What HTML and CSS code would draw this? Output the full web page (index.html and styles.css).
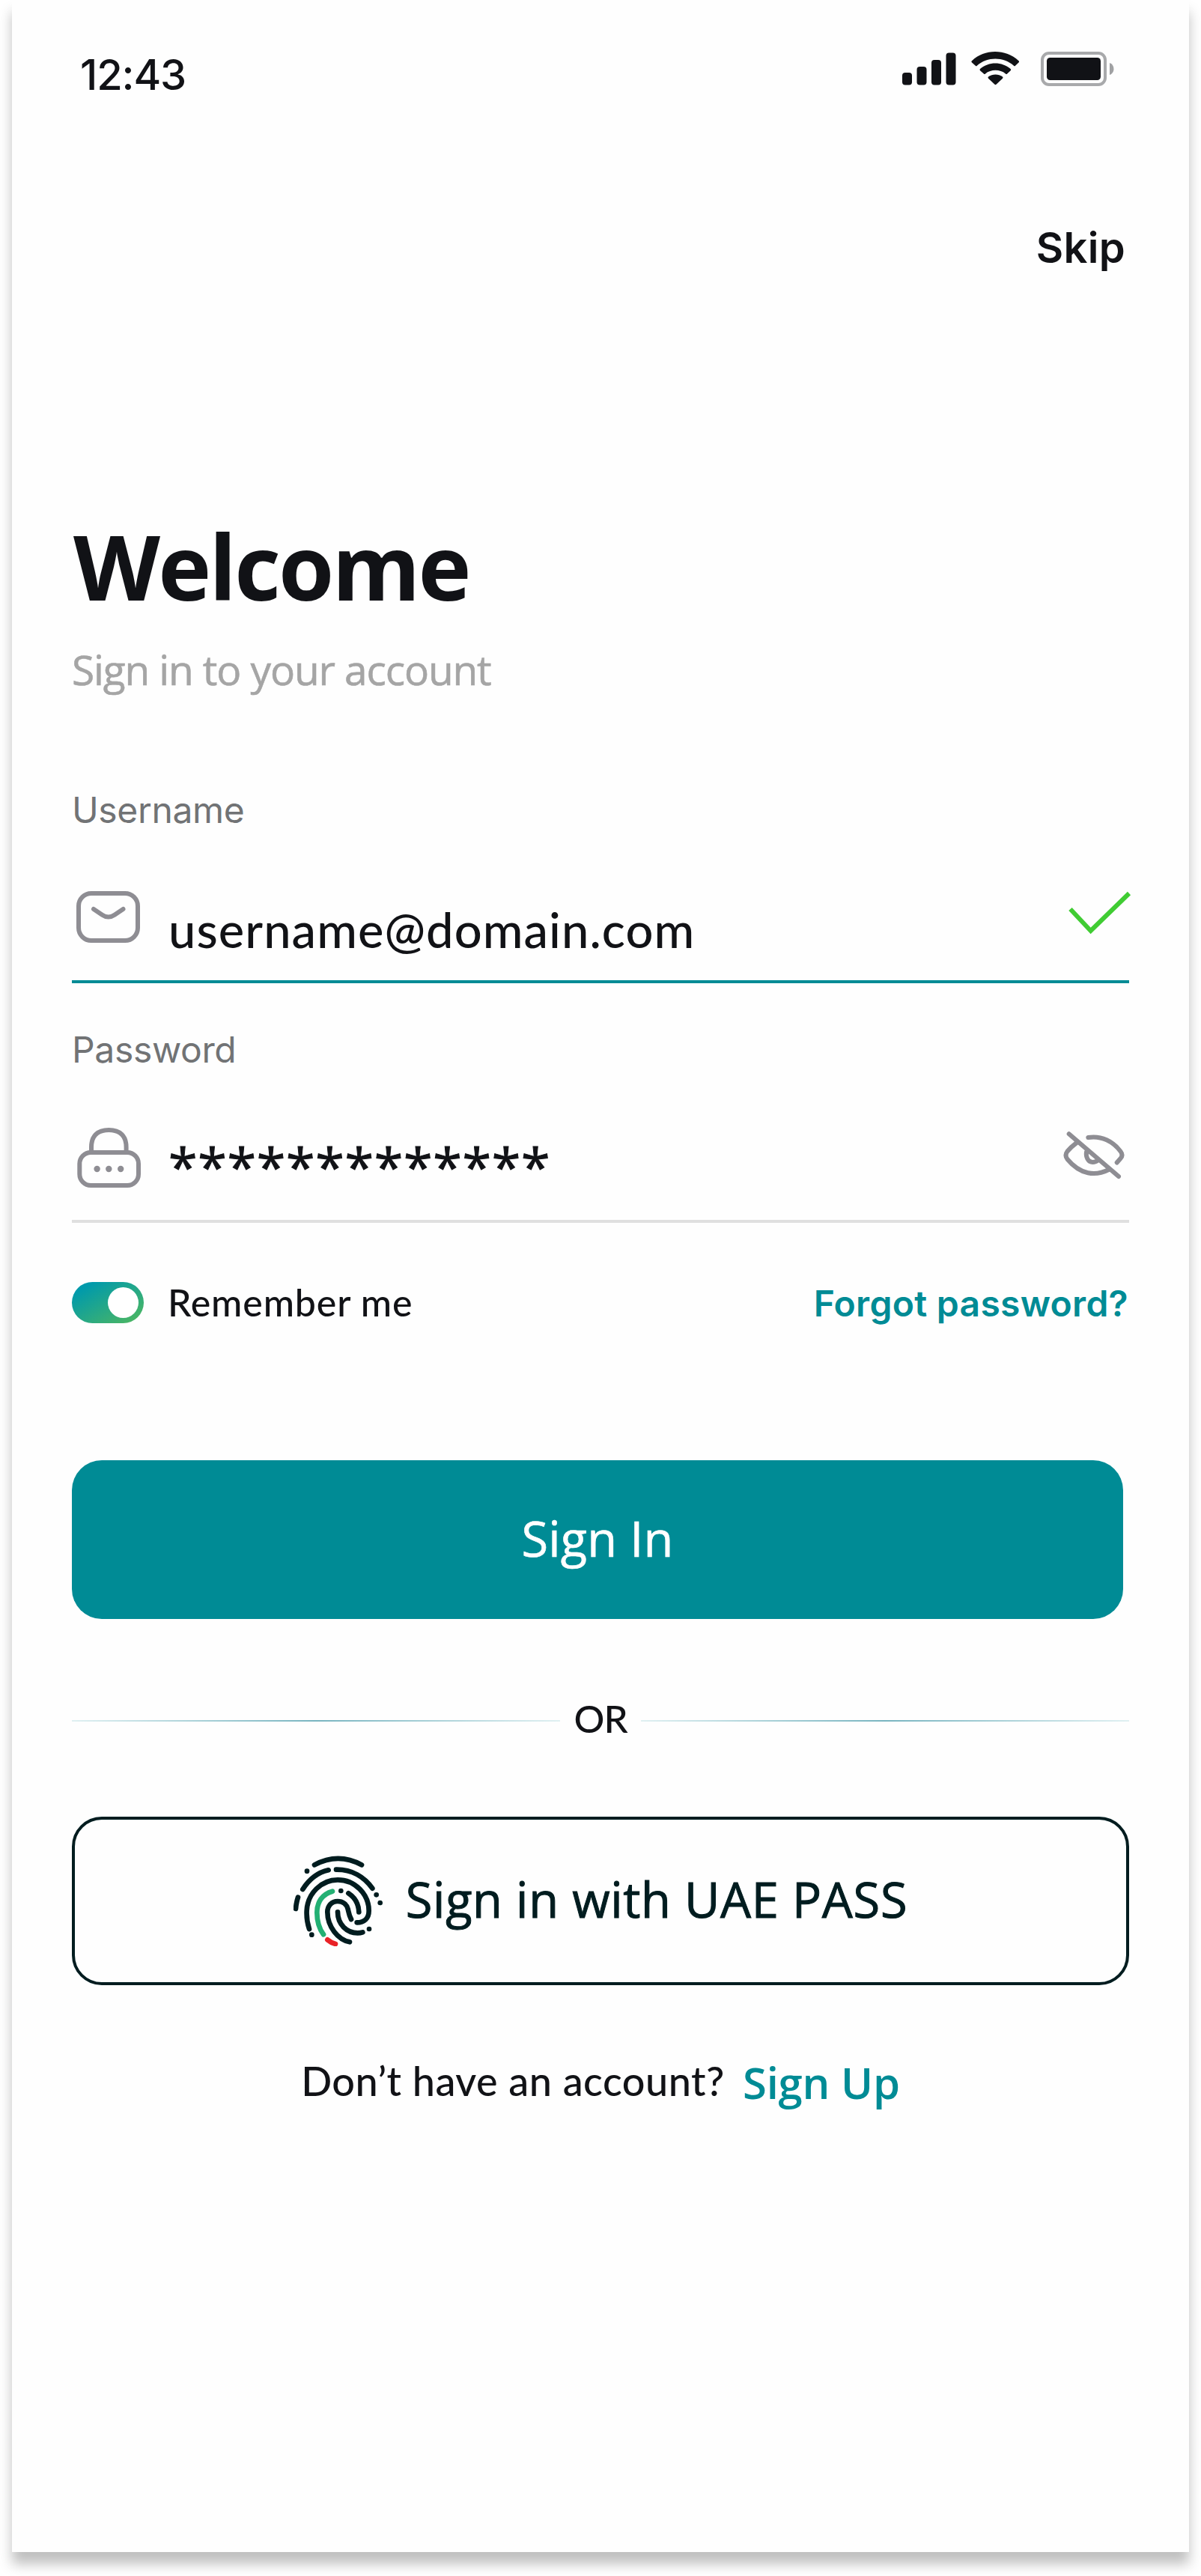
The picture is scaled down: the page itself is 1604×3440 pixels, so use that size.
FILE: index.html
```html
<!DOCTYPE html>
<html lang="en">
<head>
<meta charset="utf-8">
<title>Sign in</title>
<link rel="stylesheet" href="styles.css">
</head>
<body>
<main class="screen">
  <header class="status">
    <span class="time">12:43</span>
    <svg class="status-icons" viewBox="0 0 283 48" fill="#111216">
      <rect x="0" y="29" width="13" height="16.500" rx="4"/>
      <rect x="19.500" y="21" width="13" height="24.500" rx="4"/>
      <rect x="39" y="12" width="13" height="33.500" rx="4"/>
      <rect x="58.500" y="2.500" width="13" height="43" rx="4"/>
      <path d="M93 15.500Q91.700 14.300 93 13.200C110-3 138-3 155.500 13.200Q156.700 14.300 155.500 15.500L151 19.700Q150 20.700 149 19.700C135 7.500 113.500 7.500 99.800 19.700Q98.800 20.700 97.800 19.700Z"/>
      <path d="M104 26.300Q102.900 25.200 104 24.100C115.500 14 133 14 144.700 24.100Q145.800 25.200 144.700 26.300L140.100 30.500Q139 31.500 138 30.500C130.500 24.300 118.500 24.300 111 30.500Q110 31.500 108.900 30.500Z"/>
      <path d="M115 36.700Q113.900 35.600 115 34.600C120.500 30.300 128.500 30.300 134 34.600Q135.100 35.600 134 36.700L125.500 44.700Q124.500 45.600 123.500 44.700Z"/>
      <rect x="187" y="3" width="84" height="42" rx="9" fill="none" stroke="#a8a9ab" stroke-width="4"/>
      <rect x="193" y="9" width="72" height="30" rx="4.500"/>
      <path d="M277 16C284.300 18.500 284.300 29.500 277 32Z" fill="#a0a1a3"/>
    </svg>
  </header>
  <a class="skip">Skip</a>
  <h1 class="title">Welcome</h1>
  <p class="subtitle">Sign in to your account</p>

  <section class="field field-active">
    <label class="label">Username</label>
    <div class="control">
      <svg class="icon" viewBox="0 0 96 96">
        <rect x="9" y="15" width="79" height="63" rx="17"/>
        <path d="M29 36L40.500 43.700Q48.700 49.300 57 43.700L68.500 36"/>
      </svg>
      <span class="value username">username@domain.com</span>
      <svg class="icon check" viewBox="0 0 96 96"><path d="M17.500 36L44.700 65L96 15"/></svg>
    </div>
  </section>
  <section class="field">
    <label class="label">Password</label>
    <div class="control">
      <svg class="icon" viewBox="0 0 96 96">
        <rect x="10.300" y="41" width="78.700" height="44" rx="15"/>
        <path d="M26 41V34C26 19 34 11 49.300 11S72.600 19 72.600 34V41"/>
        <g fill="#8e8d93" stroke="none"><circle cx="33.600" cy="63" r="4.200"/><circle cx="49.300" cy="63" r="4.200"/><circle cx="65.200" cy="63" r="4.200"/></g>
      </svg>
      <span class="value password">*************</span>
      <svg class="icon" viewBox="0 0 96 96">
        <path d="M15.700 16.300L82 73"/>
        <path d="M41.300 21C59 18 75 26.500 84.500 39.500Q88.500 44.700 84.500 49L79.700 54.500"/>
        <path d="M26.300 27.700Q19 33 13.500 39.500Q9.500 44.700 13.500 50C31 71 51 73 68.700 64"/>
        <path d="M39 40.300C38 47 41 54 47.300 54Q51.500 54 54.700 51"/>
      </svg>
    </div>
  </section>

  <div class="options">
    <span class="toggle"><span class="knob"></span></span>
    <span class="remember">Remember me</span>
    <a class="forgot">Forgot password?</a>
  </div>

  <button class="signin">Sign In</button>

  <div class="divider"><span class="or">OR</span></div>

  <button class="uae">
    <svg class="finger" viewBox="66 84 360 363">
      <g fill="none" stroke="#001c1f" stroke-width="20" stroke-linecap="round">
        <path d="M150 121Q245 70 339 121"/>
        <path d="M103 219C128 180 165 151 206 142"/>
        <path d="M237 140C300 139 350 170 382 215"/>
        <path d="M84 251Q77 272 75 297"/>
        <path d="M129 378C118 345 118 325 119 305C122 235 178 181 243 181C312 181 368 238 368 305C368 335 349 352 320 352"/>
        <path d="M297 339C288 323 287 310 284 298C279 279 264 267 243 267C219 267 202 285 202 310C202 370 245 421 291 430"/>
        <path d="M243 310C243 360 280 394 323 394Q334 394 343 391"/>
        <path d="M286 235C312 252 327 280 328 310"/>
        <path d="M222 227C180 238 160 272 160 312C160 345 170 378 186 400" stroke="#23b074"/>
        <path d="M202 421Q215 432 234 438" stroke="#e92227"/>
      </g>
      <g fill="#001c1f"><circle cx="120" cy="146" r="10"/><circle cx="398" cy="241" r="10"/><circle cx="413" cy="273" r="10"/><circle cx="256" cy="225" r="10"/><circle cx="139" cy="401" r="10"/><circle cx="369" cy="378" r="10"/></g>
    </svg>
    <span class="uae-text">Sign in with UAE PASS</span>
  </button>

  <p class="footer"><span class="ask">Don’t have an account?</span><a class="signup">Sign Up</a></p>
</main>
</body>
</html>
```
FILE: styles.css
```css
* { box-sizing: border-box; }
body { margin: 0; background: #fff; overflow: hidden; height: 3440px; }
.screen {
  display: flex;
  flex-direction: column;
  width: 1572px;
  height: 3408px;
  margin: 0 auto;
  padding: 0 80px;
  background: #fefefe;
  box-shadow: 0 16px 16px rgba(0, 0, 0, .25);
  color: #111216;
  font-family: Lato, "Open Sans", sans-serif;
}
.status {
  display: flex;
  justify-content: space-between;
  align-items: flex-start;
  height: 132px;
  padding: 68px 20px 0 11px;
}
.time {
  font: 500 56px/64px Inter, sans-serif;
  letter-spacing: -1.1px;
}
.status-icons { width: 283px; height: 48px; }
.skip {
  align-self: flex-end;
  margin-top: 167px;
  padding-right: 5px;
  font: 600 56px/64px Inter, sans-serif;
  letter-spacing: .35px;
}
.title {
  margin: 321px 0 0;
  padding-left: 2px;
  font: 700 120px/144px "Open Sans", sans-serif;
  letter-spacing: -2.8px;
}
.subtitle {
  margin: 30px 0 0;
  font: 400 55px/72px "Open Sans", sans-serif;
  letter-spacing: -1.12px;
  color: #a5a5a5;
  -webkit-text-stroke: .6px #a5a5a5;
}
.field { margin-top: 61px; }
.subtitle + .field { margin-top: 124px; }
.label {
  display: block;
  font: 400 48px/56px Inter, sans-serif;
  letter-spacing: -.35px;
  color: #717375;
}
.control {
  display: flex;
  align-items: flex-start;
  height: 135px;
  margin-top: 68px;
  border-bottom: 4px solid #e0e0e0;
}
.field-active .control { border-color: #008b95; }
.icon {
  flex: none;
  width: 96px;
  height: 96px;
  overflow: visible;
  fill: none;
  stroke: #8e8d93;
  stroke-width: 6px;
  stroke-linecap: round;
  stroke-linejoin: round;
}
.check { stroke: #40cc33; stroke-linecap: butt; stroke-linejoin: miter; }
.value { flex: 1; margin-left: 33px; }
.username {
  padding-top: 25px;
  font-size: 65px;
  font-weight: 500;
  line-height: 76px;
  letter-spacing: 1.08px;
}
.password {
  padding-top: 17px;
  font: 400 70px/84px "Open Sans", sans-serif;
  letter-spacing: .7px;
  -webkit-text-stroke: 1px #111216;
}
.options {
  display: flex;
  align-items: center;
  height: 60px;
  margin-top: 76px;
}
.toggle {
  display: flex;
  justify-content: flex-end;
  width: 96px;
  height: 55px;
  padding: 7px;
  border-radius: 28px;
  background: linear-gradient(150deg, #009aab 15%, #48b566 90%);
}
.knob { width: 41px; height: 41px; border-radius: 50%; background: #fff; }
.remember {
  margin-left: 32px;
  font-size: 50px;
  font-weight: 500;
  line-height: 60px;
  letter-spacing: .87px;
}
.forgot {
  margin-left: auto;
  padding: 4px 1px 0 0;
  font: 600 48px/60px Inter, sans-serif;
  letter-spacing: .29px;
  color: #008b95;
}
.signin {
  width: 1404px;
  height: 212px;
  margin-top: 181px;
  padding: 0 0 5px;
  border: 0;
  border-radius: 40px;
  background: #008b95;
  color: #fff;
  font: 400 65px/78px "Open Sans", sans-serif;
  letter-spacing: .13px;
  -webkit-text-stroke: .6px #fff;
}
.divider {
  display: flex;
  align-items: center;
  height: 60px;
  margin-top: 103px;
}
.divider::before,
.divider::after {
  content: "";
  width: 652px;
  height: 2px;
  margin-top: 6px;
  background: linear-gradient(90deg, #e0f0f2, #78b4c0 50%, #e0f0f2);
}
.or {
  flex: 1;
  text-align: center;
  font-size: 51px;
  font-weight: 500;
  line-height: 60px;
  letter-spacing: -1px;
}
.uae {
  display: flex;
  align-items: center;
  justify-content: center;
  gap: 30px;
  height: 225px;
  margin-top: 101px;
  padding: 0;
  border: 4px solid #001c1f;
  border-radius: 40px;
  background: none;
  color: #001c1f;
}
.finger { width: 120px; height: 121px; }
.uae-text {
  margin-bottom: 6px;
  font: 400 65px/78px "Open Sans", sans-serif;
  letter-spacing: .64px;
  -webkit-text-stroke: 1px #001c1f;
}
.footer {
  display: flex;
  justify-content: center;
  gap: 24px;
  margin: 92px 0 0;
}
.ask {
  font-size: 54px;
  font-weight: 500;
  line-height: 72px;
  letter-spacing: .5px;
}
.signup {
  padding-top: 2px;
  font: 600 58px/72px "Open Sans", sans-serif;
  letter-spacing: -.2px;
  color: #008b95;
}
```
